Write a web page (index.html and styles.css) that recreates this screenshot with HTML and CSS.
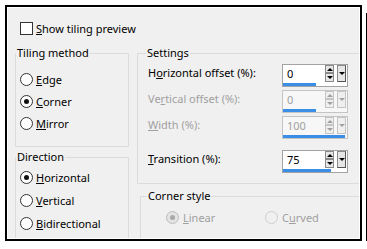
FILE: index.html
```html
<!DOCTYPE html>
<html lang="en">
<head>
    <meta charset="UTF-8">
    <title>Tiling</title>
    <link rel="stylesheet" href="styles.css">
</head>
<body>
    <div class="frame">
        <div class="dialog">
            <label class="check-row">
                <span class="checkbox"></span>
                <span><u>S</u>how tiling preview</span>
            </label>

            <div class="columns">
                <div class="col-left">
                    <fieldset class="group tiling">
                        <legend>Tiling method</legend>
                        <div class="options">
                            <div class="radio-row"><span class="radio"></span><span><u>E</u>dge</span></div>
                            <div class="radio-row"><span class="radio checked"></span><span><u>C</u>orner</span></div>
                            <div class="radio-row"><span class="radio"></span><span><u>M</u>irror</span></div>
                        </div>
                    </fieldset>

                    <fieldset class="group direction">
                        <legend>Direction</legend>
                        <div class="options">
                            <div class="radio-row"><span class="radio checked"></span><span><u>H</u>orizontal</span></div>
                            <div class="radio-row"><span class="radio"></span><span><u>V</u>ertical</span></div>
                            <div class="radio-row"><span class="radio"></span><span><u>B</u>idirectional</span></div>
                        </div>
                    </fieldset>
                </div>

                <div class="col-right">
                    <fieldset class="group settings">
                        <legend>Settings</legend>
                        <div class="fields">
                            <div class="field-row">
                                <span class="field-label">H<u>o</u>rizontal offset (%):</span>
                                <div class="spin">
                                    <div class="spin-main">
                                        <span class="spin-value">0</span>
                                        <div class="spin-arrows">
                                            <span class="spin-btn"><i class="arrow-up"></i></span>
                                            <span class="spin-btn"><i class="arrow-down"></i></span>
                                        </div>
                                        <span class="spin-drop"><i class="arrow-down"></i></span>
                                    </div>
                                    <div class="spin-bar" style="width: 33px"></div>
                                </div>
                            </div>
                            <div class="field-row disabled">
                                <span class="field-label">Ve<u>r</u>tical offset (%):</span>
                                <div class="spin">
                                    <div class="spin-main">
                                        <span class="spin-value">0</span>
                                        <div class="spin-arrows">
                                            <span class="spin-btn"><i class="arrow-up"></i></span>
                                            <span class="spin-btn"><i class="arrow-down"></i></span>
                                        </div>
                                        <span class="spin-drop"><i class="arrow-down"></i></span>
                                    </div>
                                    <div class="spin-bar" style="width: 33px"></div>
                                </div>
                            </div>
                            <div class="field-row disabled">
                                <span class="field-label"><u>W</u>idth (%):</span>
                                <div class="spin">
                                    <div class="spin-main">
                                        <span class="spin-value">100</span>
                                        <div class="spin-arrows">
                                            <span class="spin-btn"><i class="arrow-up"></i></span>
                                            <span class="spin-btn"><i class="arrow-down"></i></span>
                                        </div>
                                        <span class="spin-drop"><i class="arrow-down"></i></span>
                                    </div>
                                    <div class="spin-bar" style="width: 62px"></div>
                                </div>
                            </div>
                            <div class="field-row last">
                                <span class="field-label"><u>T</u>ransition (%):</span>
                                <div class="spin">
                                    <div class="spin-main">
                                        <span class="spin-value">75</span>
                                        <div class="spin-arrows">
                                            <span class="spin-btn"><i class="arrow-up"></i></span>
                                            <span class="spin-btn"><i class="arrow-down"></i></span>
                                        </div>
                                        <span class="spin-drop"><i class="arrow-down"></i></span>
                                    </div>
                                    <div class="spin-bar" style="width: 48px"></div>
                                </div>
                            </div>
                        </div>
                    </fieldset>

                    <fieldset class="group corner">
                        <legend>Corner style</legend>
                        <div class="options">
                            <div class="radio-row disabled linear"><span class="radio checked"></span><span><u>L</u>inear</span></div>
                            <div class="radio-row disabled"><span class="radio light"></span><span>C<u>u</u>rved</span></div>
                        </div>
                    </fieldset>
                </div>
            </div>
        </div>
    </div>
</body>
</html>
```

FILE: styles.css
```css
* {
    box-sizing: border-box;
}
body {
    margin: 0;
    background: #fff;
    font-family: "Noto Sans", "Segoe UI", sans-serif;
    font-size: 11px;
    color: #000;
}
u {
    text-underline-offset: 1px;
}
.frame {
    width: 357px;
    height: 236px;
    margin: 5px 0 0 5px;
    border: 2px solid #000;
    padding: 1px;
    background: #fff;
    box-shadow: 4px 6px 0 #fff, 5px 8px 0 #000;
}
.dialog {
    height: 100%;
    background: #f0f0f0;
    padding-top: 14px;
    overflow: hidden;
}
.check-row {
    display: flex;
    align-items: center;
    gap: 3px;
    height: 13px;
    margin-left: 12px;
}
.checkbox {
    width: 13px;
    height: 13px;
    border: 1px solid #333;
    background: #fff;
}
.columns {
    display: flex;
    gap: 8px;
    margin-top: 11px;
    padding-left: 7px;
}
.col-left {
    width: 114px;
    flex-shrink: 0;
    display: flex;
    flex-direction: column;
    gap: 3px;
}
.col-right {
    width: 260px;
    flex-shrink: 0;
    display: flex;
    flex-direction: column;
    gap: 5px;
}
fieldset {
    margin: 0;
    padding: 0;
    min-width: 0;
    border: 1px solid #dcdcdc;
}
legend {
    padding: 0 1px;
    line-height: 14px;
}
.radio-row {
    display: flex;
    align-items: center;
    gap: 3px;
    height: 22px;
}
.radio {
    width: 13px;
    height: 13px;
    border: 1px solid #333;
    border-radius: 50%;
    background: #fff;
    display: flex;
    align-items: center;
    justify-content: center;
}
.radio.checked::after {
    content: "";
    width: 5px;
    height: 5px;
    border-radius: 50%;
    background: #111;
}
.tiling .options {
    padding: 8px 0 12px 4px;
}
.direction .options {
    padding: 2px 0 8px 4px;
}
.direction .radio-row {
    height: 23px;
}
.settings legend {
    margin-left: 8px;
}
.fields {
    display: flex;
    flex-direction: column;
    gap: 3px;
    padding: 4px 0 10px 10px;
}
.field-row {
    display: flex;
    align-items: flex-start;
    height: 23px;
}
.field-row.last {
    margin-top: 8px;
}
.field-label {
    width: 134px;
    padding-top: 2px;
    line-height: 14px;
}
.spin {
    width: 66px;
    height: 23px;
    border: 1px solid #a3a3a3;
    background: #fff;
    display: flex;
    flex-direction: column;
}
.spin-main {
    display: flex;
    height: 17px;
}
.spin-value {
    flex: 1;
    padding-left: 4px;
    line-height: 17px;
}
.spin-arrows {
    width: 9px;
    display: flex;
    flex-direction: column;
}
.spin-btn {
    height: 8px;
    border: 1px solid #8a8a8a;
    background: #e6e6e6;
    display: flex;
    align-items: center;
    justify-content: center;
}
.spin-btn + .spin-btn {
    height: 9px;
}
.spin-drop {
    width: 9px;
    margin: 0 1px 0 3px;
    border: 1px solid #8a8a8a;
    border-right-color: #555;
    border-bottom-color: #555;
    background: #e6e6e6;
    display: flex;
    align-items: center;
    justify-content: center;
}
.arrow-up {
    width: 0;
    height: 0;
    border-left: 3px solid transparent;
    border-right: 3px solid transparent;
    border-bottom: 3px solid #000;
}
.arrow-down {
    width: 0;
    height: 0;
    border-left: 3px solid transparent;
    border-right: 3px solid transparent;
    border-top: 3px solid #000;
}
.spin-bar {
    height: 3px;
    margin-top: 1px;
    background: #3a8ee6;
}
.disabled {
    color: #a0a0a0;
}
.disabled .spin {
    background: #f7f7f7;
    border-color: #c4c4c4;
}
.disabled .spin-btn,
.disabled .spin-drop {
    border-color: #c4c4c4;
    background: #efefef;
}
.disabled .arrow-up {
    border-bottom-color: #a0a0a0;
}
.disabled .arrow-down {
    border-top-color: #a0a0a0;
}
.corner {
    margin-left: 3px;
}
.corner legend {
    margin-left: 6px;
}
.corner .options {
    display: flex;
    padding: 3px 0 12px 25px;
}
.corner .radio-row {
    gap: 4px;
}
.corner .linear {
    width: 99px;
}
.disabled .radio {
    border-color: #bcbcbc;
    background: #e3e3e3;
}
.disabled .radio.checked::after {
    background: #a8a8a8;
}
.disabled .radio.light {
    border-color: #cfcfcf;
    background: #f0f0f0;
}
```
